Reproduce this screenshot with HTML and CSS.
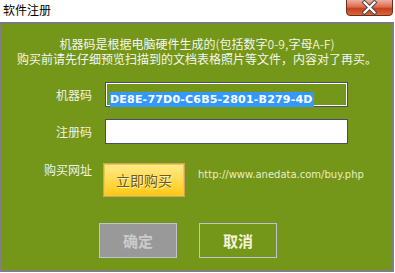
FILE: index.html
```html
<!DOCTYPE html>
<html>
<head>
<meta charset="utf-8">
<link rel="stylesheet" href="styles.css">
</head>
<body>
<div class="win">
  <div class="titlebar">
    <span class="title">软件注册</span>
    <div class="close">
      <svg width="47" height="16" viewBox="0 0 47 16">
        <defs>
          <linearGradient id="cg" x1="0" y1="0" x2="0" y2="1">
            <stop offset="0" stop-color="#eeb0a0"/>
            <stop offset="0.45" stop-color="#dc6a50"/>
            <stop offset="0.55" stop-color="#c8401e"/>
            <stop offset="1" stop-color="#d86a3c"/>
          </linearGradient>
        </defs>
        <path d="M0.5 0 V12 Q0.5 15.5 4 15.5 H43 Q46.5 15.5 46.5 12 V0" fill="url(#cg)" stroke="#6e2a1c" stroke-width="1"/>
        <path d="M18.5 2.5 L28.5 12.5 M28.5 2.5 L18.5 12.5" stroke="#4a4a4a" stroke-width="4.2" stroke-linecap="square"/>
        <path d="M18.5 2.5 L28.5 12.5 M28.5 2.5 L18.5 12.5" stroke="#ffffff" stroke-width="2.2" stroke-linecap="square"/>
      </svg>
    </div>
  </div>
  <div class="panel">
    <div class="intro">
      <div>机器码是根据电脑硬件生成的<span class="asc">(</span>包括数字<span class="asc">0-9,</span>字母<span class="asc">A-F)</span></div>
      <div>购买前请先仔细预览扫描到的文档表格照片等文件，内容对了再买。</div>
    </div>
    <div class="row row-field">
      <span class="label">机器码</span>
      <div class="field field-code"><span class="sel">DE8E-77D0-C6B5-2801-B279-4D</span></div>
    </div>
    <div class="row row-field row-second">
      <span class="label">注册码</span>
      <div class="field field-reg"></div>
    </div>
    <div class="row row-buy">
      <span class="label label-top">购买网址</span>
      <div class="buy-btn">立即购买</div>
      <span class="url">http://www.anedata.com/buy.php</span>
    </div>
    <div class="actions">
      <div class="btn btn-ok">确定</div>
      <div class="btn btn-cancel">取消</div>
    </div>
  </div>
</div>
</body>
</html>
```
FILE: styles.css
```css
html, body {
  margin: 0;
  padding: 0;
  background: #ffffff;
}
body {
  width: 395px;
  height: 273px;
  overflow: hidden;
  font-family: "Noto Sans CJK SC", "DejaVu Sans", sans-serif;
}
.win {
  width: 395px;
}
.titlebar {
  height: 22px;
  display: flex;
  justify-content: space-between;
  align-items: flex-start;
  background: #ffffff;
}
.title {
  margin-left: 3px;
  margin-top: 3px;
  font-size: 12px;
  line-height: 14px;
  color: #000000;
}
.close {
  margin-right: 2px;
  height: 16px;
  line-height: 0;
}
.panel {
  box-sizing: border-box;
  width: 394px;
  height: 250px;
  background: #749619;
  border: 2px solid #808080;
  border-top-color: #7a7a7a;
  padding-top: 12px;
}
.intro {
  text-align: center;
  font-size: 12px;
  line-height: 15px;
  color: #f6f6ee;
}
.asc {
  color: #eeeec4;
}
.row {
  display: flex;
  align-items: center;
}
.row-field {
  margin-top: 16px;
  height: 25px;
}
.row-second {
  margin-top: 12px;
}
.label {
  width: 90px;
  text-align: right;
  font-size: 12px;
  line-height: 14px;
  color: #f2f2e6;
  flex: none;
}
.field {
  box-sizing: border-box;
  margin-left: 13px;
  width: 243px;
  height: 25px;
  border: 1px solid #4a4c74;
}
.field-code {
  background: #749619;
  box-shadow: inset 0 0 0 1px #ffffff;
  padding: 1px 0 0 4px;
}
.sel {
  display: inline-block;
  background: #3399ff;
  color: #ffffff;
  font-family: "DejaVu Sans", sans-serif;
  font-weight: bold;
  font-size: 11px;
  letter-spacing: 0.2px;
  line-height: 15px;
  padding-right: 1px;
}
.field-reg {
  background: #ffffff;
}
.row-buy {
  margin-top: 19px;
  align-items: flex-start;
  height: 34px;
}
.label-top {
  line-height: 13px;
}
.buy-btn {
  box-sizing: border-box;
  margin-left: 11px;
  width: 82px;
  height: 34px;
  border: 1px solid #cfa35e;
  box-shadow: inset 0 0 0 1px #f2c84a;
  background: linear-gradient(#ffeb8a, #ffd94a 55%, #ffc80e);
  display: flex;
  align-items: center;
  justify-content: center;
  font-size: 14px;
  color: #6e5c14;
  text-shadow: 1px 1px 0 rgba(255, 255, 255, 0.7);
}
.url {
  margin-left: 13px;
  margin-top: 5px;
  font-family: "DejaVu Sans", sans-serif;
  font-size: 10px;
  line-height: 14px;
  color: #ecedc8;
}
.actions {
  margin-top: 26px;
  padding-left: 97px;
  display: flex;
  gap: 22px;
}
.btn {
  box-sizing: border-box;
  width: 78px;
  height: 35px;
  border: 1px solid #c2c2d6;
  display: flex;
  align-items: center;
  justify-content: center;
  font-size: 15px;
  font-weight: bold;
}
.btn-ok {
  background: #999999;
  color: #cbcbcb;
}
.btn-cancel {
  background: #749619;
  color: #f4f4d4;
}
```
